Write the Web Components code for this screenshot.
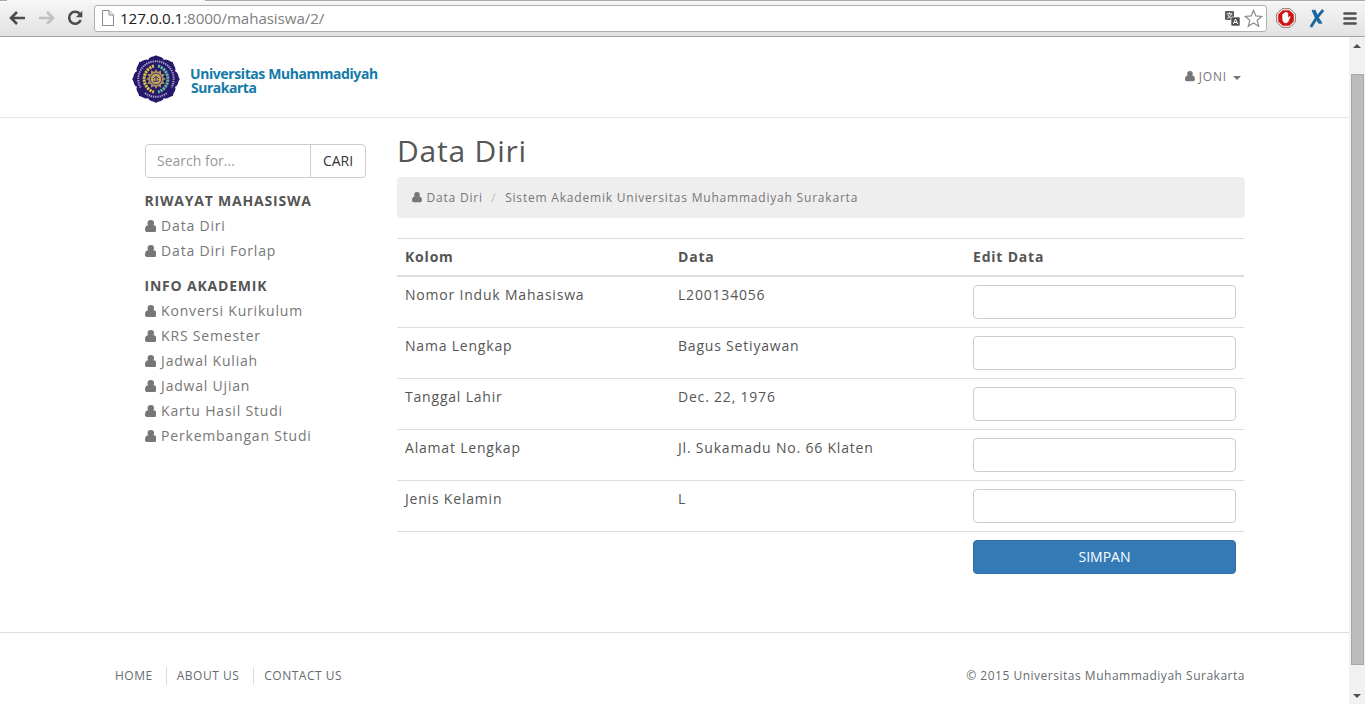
<!DOCTYPE html>
<html lang="id">
<head>
<meta charset="utf-8">
<title>Data Diri</title>
<style>
html,body{margin:0;height:100%;overflow:hidden;background:#fff}
body{font:14px/25px "Open Sans","Noto Sans",sans-serif;letter-spacing:.8px;color:#555}
</style>
</head>
<body>
<app-window>
  <browser-bar slot="bar"></browser-bar>
  <site-header></site-header>
  <page-columns>
    <side-nav slot="side"></side-nav>
    <page-title>Data Diri</page-title>
    <bread-crumb></bread-crumb>
    <data-form></data-form>
  </page-columns>
  <site-footer></site-footer>
  <scroll-bar slot="scroll"></scroll-bar>
</app-window>
<script>
const define = (name, html) => {
  const t = document.createElement('template');
  t.innerHTML = html;
  customElements.define(name, class extends HTMLElement {
    constructor() {
      super();
      this.attachShadow({mode: 'open'}).append(t.content.cloneNode(true));
    }
  });
};

define('app-window', `<style>
:host{display:flex;flex-direction:column;width:1365px;height:704px;overflow:hidden}
.view{flex:1;display:flex;min-height:0}
.page{flex:1;min-width:0;display:flex;flex-direction:column}
</style><slot name="bar"></slot><div class="view"><div class="page"><slot></slot></div><slot name="scroll"></slot></div>`);

define('user-icon', `<style>:host{display:block;flex:none;width:.83em;height:.86em}svg{display:block;width:100%;height:100%}</style>
<svg viewBox="0 0 11 12" preserveAspectRatio="none"><path fill="currentColor" d="M5.500 0a3.100 3.100 0 0 1 3.100 3.100c0 1.100-.3 1.700-.7 2.200C10 5.300 11 6.900 11 9.700 11 11.200 10.200 12 9 12H2C.8 12 0 11.200 0 9.700 0 6.900 1 5.300 3.100 5.300c-.4-.5-.7-1.100-.7-2.200A3.100 3.100 0 0 1 5.500 0z"/></svg>`);

define('browser-bar', `<style>
:host{display:flex;box-sizing:border-box;height:37px;flex:none;align-items:center;background:linear-gradient(#f5f5f5,#e3e3e3);border-top:1px solid #a9a9a9;border-bottom:1px solid #a4a4a4;padding:0 8px 1px 8px;letter-spacing:0;box-shadow:inset 0 1px #fafafa;position:relative}
.tab{position:absolute;left:7px;top:-1px;width:198px;height:1px;background:#f6f6f6}
svg{flex:none;display:block}
.fwd{margin-left:12px}.rel{margin-left:11px}
.box{flex:1;display:flex;align-items:center;box-sizing:border-box;height:27px;margin:0 9px 0 11px;background:#fff;border:1px solid #b0b0b0;border-radius:3px;padding:0 3px 0 7px}
.url{flex:1;margin-left:6px;font:15.2px/20px "Open Sans",sans-serif;color:#808080;white-space:nowrap;letter-spacing:-.1px}
.url b{font-weight:400;color:#222}
</style>
<div class="tab"></div>
<svg width="18" height="16" viewBox="0 0 18 16" fill="none" stroke="#4c4c4c" stroke-width="2.6"><path d="M9 2 3 8l6 6M3.500 8H17"/></svg>
<svg class="fwd" width="18" height="16" viewBox="0 0 18 16" fill="none" stroke="#c0c0c0" stroke-width="2.600"><path d="m9 2 6 6-6 6M14.500 8H1"/></svg>
<svg class="rel" width="16" height="16" viewBox="0 0 16 16"><path d="M13 4.200A6 6 0 1 0 13.700 10" fill="none" stroke="#4c4c4c" stroke-width="2.600"/><path d="M15.300.8v6.400H8.900z" fill="#4c4c4c"/></svg>
<div class="box">
<svg width="12" height="16" viewBox="0 0 12 16" fill="#fff" stroke="#8c8c8c"><path d="M.5.500h6.500l4.500 4.500v10.500H.5z"/><path d="M7 .5V5h4.500" fill="#eee"/></svg>
<div class="url"><b>127.0.0.1</b>:8000/mahasiswa/2/</div>
<svg width="15" height="15" viewBox="0 0 15 15"><rect width="9" height="9" rx="1" fill="#5c5c5c"/><path d="M1.800 2.800h5.400M4.500 1.300v1.500M2.200 7.300C4.500 6.300 5.800 5 6.300 2.800M2.800 3.500C3.500 5.500 5 6.700 6.800 7.300" stroke="#fff" stroke-width=".9" fill="none"/><rect x="6" y="6" width="9" height="9" rx="1" fill="#4d4d4d" stroke="#fff" stroke-width=".6"/><path d="m8.300 13 2.200-5 2.200 5M9 11.500h3" stroke="#fff" fill="none"/></svg>
<svg style="margin-left:4px" width="19" height="19" viewBox="0 0 19 19"><path d="m9.500 1.300 2.300 5.600 6 .5-4.600 3.900 1.500 5.900-5.200-3.200-5.200 3.200 1.500-5.900L1.200 7.400l6-.5z" fill="#fff" stroke="#8a8a8a" stroke-width="1.200"/></svg>
</div>
<svg width="20" height="20" viewBox="0 0 20 20"><path d="M6 .700h8L19.300 6v8L14 19.300H6L.7 14V6z" fill="#fff" stroke="#8d6868" stroke-width="1"/><path d="M6.600 2.200h6.800l4.400 4.400v6.800l-4.400 4.400H6.600l-4.400-4.400V6.600z" fill="#d01414"/><path d="M6.300 10V6.300q.7-.9 1.300 0V5q.8-1 1.500 0V4.300q.8-1 1.600 0V5q.8-.9 1.500 0v4.500l1-1q1.300-.5 1.200.6l-2 4.500Q11 15.600 8.600 15 6.300 14 6.300 10z" fill="#fff"/></svg>
<svg style="margin-left:13px" width="16" height="19" viewBox="0 0 16 19"><path d="M3 1.300h3.300L9.300 8.200 13 14.200H9.600L6.300 9z" fill="#1b679d" stroke="#1b679d" stroke-width=".8"/><path d="M14.200 1C10.500 5 5 12 1.800 18" fill="none" stroke="#1b679d" stroke-width="2.700"/></svg>
<svg style="margin-left:18px" width="14" height="13" viewBox="0 0 14 13"><path d="M1.500 1.500h11M1.500 6.500h11M1.500 11.500h11" stroke="#505050" stroke-width="2.700" stroke-linecap="round"/></svg>`);

const cx = 24, cy = 24;
const polar = (r, a) => [cx + r * Math.cos(a), cy + r * Math.sin(a)].map(n => n.toFixed(2)).join(' ');
const lobes = () => {
  let d = '';
  const s = Math.PI / 8;
  for (let i = 0; i < 8; i++) {
    const a = -Math.PI / 2 + i * 2 * s;
    d += (i ? 'L' : 'M') + polar(24, a) + 'C' + polar(22, a + .06) + ' ' + polar(23.8, a + .3) + ' ' + polar(20.5, a + s)
      + 'C' + polar(23.8, a + 2 * s - .3) + ' ' + polar(22, a + 2 * s - .06) + ' ' + polar(24, a + 2 * s);
  }
  return d + 'Z';
};
const gear = () => Array.from({length: 24}, (_, i) => (i ? 'L' : 'M') + polar(i % 2 ? 7.2 : 10, i * Math.PI / 12 - Math.PI / 2)).join('') + 'Z';

define('uni-logo', `<style>:host{display:flex;align-items:flex-start;letter-spacing:0}svg{display:block}
.name{margin:12px 0 0 11px;text-indent:-1px;font:700 14px/14px "Noto Sans","Open Sans",sans-serif;letter-spacing:-.38px;color:#147ba8;white-space:nowrap}</style>
<svg width="48" height="48" viewBox="0 0 48 48">
<path d="${lobes()}" fill="#28186c"/>
<path d="M8.500 32.500A17.700 17.700 0 1 1 39.500 32.500M13 38A17.700 17.700 0 0 0 35 38" fill="none" stroke="#e4e0f4" stroke-width="2" stroke-dasharray="1.300 .9" opacity=".7"/>
<path d="M22 11A13.500 13.500 0 0 0 22 37" fill="none" stroke="#d6c93a" stroke-width="3" stroke-dasharray="2.200 .8"/>
<path d="M26 11A13.500 13.500 0 0 1 26 37" fill="none" stroke="#62bd98" stroke-width="3" stroke-dasharray="2.200 .8"/>
<path d="${gear()}" fill="#a8925c"/><circle cx="24" cy="24" r="5.600" fill="#c4a758" stroke="#554270"/><path d="M21 24q3-4 6 0M21 26q3 2 6-1M24 21v5" fill="none" stroke="#40336b" stroke-width="1"/>
</svg><div class="name">Universitas Muhammadiyah<br>Surakarta</div>`);

define('site-header', `<style>
:host{display:flex;flex:none;box-sizing:border-box;height:81px;border-bottom:1px solid #e7e7e7;padding:18px 108px 0 132px;justify-content:space-between}
.user{display:flex;align-items:center;height:24px;margin-top:9px;font-size:12px;color:#777}
user-icon{margin:1px 4px 0 0}
.caret{border:4px solid transparent;border-top-color:#777;border-bottom:0;margin:3px 0 0 6px}
</style><uni-logo></uni-logo><div class="user"><user-icon></user-icon>JONI<i class="caret"></i></div>`);

define('page-columns', `<style>
:host{display:grid;flex:none;grid-template-columns:221px 848px;column-gap:31px;height:514px;padding-left:145px}
</style><slot name="side"></slot><main><slot></slot></main>`);

define('search-box', `<style>
:host{display:flex;height:34px;box-sizing:border-box;border:1px solid #ccc;border-radius:4px;font-size:14px;line-height:32px;letter-spacing:0}
.q{flex:1;padding-left:11px;color:#999}.b{width:54px;border-left:1px solid #ccc;text-align:center;color:#333}
</style><div class="q">Search for...</div><div class="b">CARI</div>`);

define('nav-link', `<style>:host{display:flex;align-items:center;color:#777;white-space:nowrap;margin-left:-.4px}user-icon{margin:1px 4.900px 0 0}</style><user-icon></user-icon><span><slot></slot></span>`);

define('side-nav', `<style>
:host{display:block;padding-top:26px}
h4{margin:10px 0 0 -.5px;font:inherit;font-weight:700;color:#555}
</style><search-box></search-box>
<h4>RIWAYAT MAHASISWA</h4><nav-link>Data Diri</nav-link><nav-link>Data Diri Forlap</nav-link>
<h4>INFO AKADEMIK</h4><nav-link>Konversi Kurikulum</nav-link><nav-link>KRS Semester</nav-link><nav-link>Jadwal Kuliah</nav-link><nav-link>Jadwal Ujian</nav-link><nav-link>Kartu Hasil Studi</nav-link><nav-link>Perkembangan Studi</nav-link>`);

define('page-title', `<style>:host{display:block;font-size:30px;line-height:33px;padding:16px 0 10px}</style><slot></slot>`);

define('bread-crumb', `<style>
:host{display:flex;align-items:center;box-sizing:border-box;height:41px;padding:0 15px;border-radius:4px;background:#eee;font-size:12px;color:#777;white-space:nowrap}
user-icon{margin-right:4.500px}i{font-style:normal;color:#bbb;margin:0 8.600px}
</style><user-icon></user-icon><span>Data Diri</span><i>/</i><span>Sistem Akademik Universitas Muhammadiyah Surakarta</span>`);

define('data-row', `<style>
:host{display:grid;grid-template-columns:273px 295px 279px;box-sizing:border-box;height:51px;border-top:1px solid #ddd}
div{padding:5px 8px 0}.f{padding-top:8px}
.in{box-sizing:border-box;padding:0;height:34px;border:1px solid #ccc;border-radius:4px}
</style><div><slot name="k"></slot></div><div><slot name="v"></slot></div><div class="f"><slot name="f"><div class="in"></div></slot></div>`);

define('data-form', `<style>
:host{display:block;width:847px;margin-top:20px}
.head{display:grid;grid-template-columns:273px 295px 279px;box-sizing:border-box;height:38px;border-top:1px solid #ddd;border-bottom:1px solid #ddd;font-weight:700;line-height:36px}
.head span{padding-left:8px}
button{display:block;width:100%;height:34px;border:1px solid #2e6da4;border-radius:4px;background:#337ab7;color:#fff;font:14px/20px "Open Sans",sans-serif;letter-spacing:0;padding:0}
</style><div class="head"><span>Kolom</span><span>Data</span><span>Edit Data</span></div>
<data-row><span slot="k">Nomor Induk Mahasiswa</span><span slot="v">L200134056</span></data-row>
<data-row><span slot="k">Nama Lengkap</span><span slot="v">Bagus Setiyawan</span></data-row>
<data-row><span slot="k">Tanggal Lahir</span><span slot="v">Dec. 22, 1976</span></data-row>
<data-row><span slot="k">Alamat Lengkap</span><span slot="v">Jl. Sukamadu No. 66 Klaten</span></data-row>
<data-row><span slot="k">Jenis Kelamin</span><span slot="v">L</span></data-row>
<data-row><button slot="f">SIMPAN</button></data-row>`);

define('site-footer', `<style>
:host{display:flex;flex:1;justify-content:space-between;align-items:flex-start;border-top:1px solid #ddd;padding:34px 104px 0 115px;font-size:12px;line-height:18px;color:#666b70;letter-spacing:.51px}
nav{display:flex}nav span+span{border-left:1px solid #ddd;margin-left:13px;padding-left:10px}nav span:last-child{margin-left:14px}
</style><nav><span>HOME</span><span>ABOUT US</span><span>CONTACT US</span></nav><div>© 2015 Universitas Muhammadiyah Surakarta</div>`);

define('scroll-bar', `<style>
:host{display:flex;flex-direction:column;align-items:center;box-sizing:border-box;width:16px;background:#f1f1f1;padding:7px 0 6px}
i{border:4px solid transparent}.u{border-bottom-color:#505050;border-top:0}.d{border-top-color:#505050;border-bottom:0;margin-top:auto}
.t{box-sizing:border-box;width:13px;height:591px;margin:26px 0 0 1px;background:#bcbcbc;border:1px solid #a8a8a8}
</style><i class="u"></i><div class="t"></div><i class="d"></i>`);
</script>
</body>
</html>
